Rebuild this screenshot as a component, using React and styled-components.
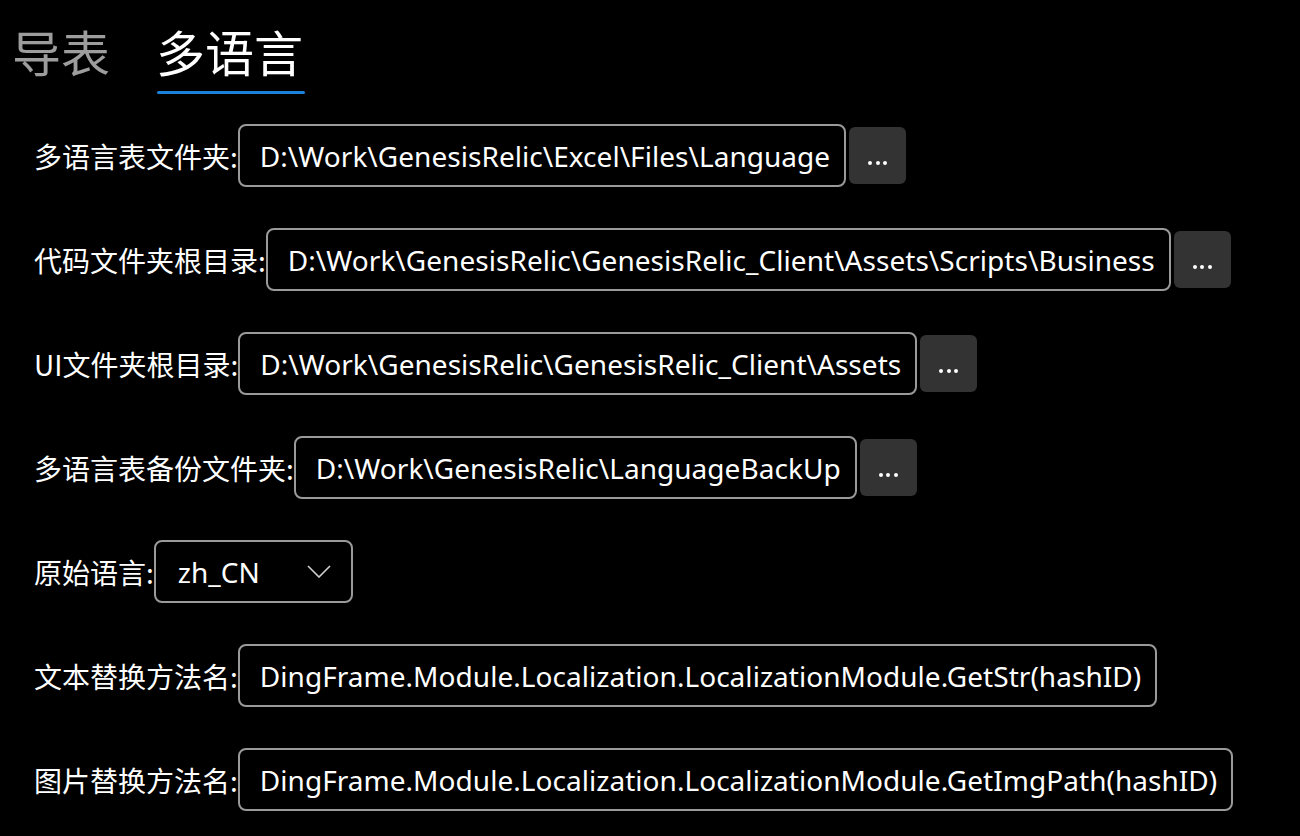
import React, { useState } from 'react'
import styled, { createGlobalStyle } from 'styled-components'

const GlobalStyle = createGlobalStyle`
    html, body {
        margin: 0;
        padding: 0;
        background: #000;
        overflow: hidden;
    }
    body {
        font-family: "Noto Sans", "Noto Sans CJK SC", sans-serif;
        color: #fff;
    }
`;

const Page = styled.div`
    width: 1300px;
    height: 836px;
    background: #000;
    overflow: hidden;
`;

const TabBar = styled.div`
    display: flex;
    gap: 46px;
    padding: 17px 0 0 12px;
`;

const Tab = styled.div`
    position: relative;
    font-family: "Noto Sans CJK SC", sans-serif;
    font-size: 49px;
    line-height: 68px;
    color: ${props => props.active ? '#fff' : '#9d9d9d'};
    padding-bottom: 12px;
    cursor: pointer;

    &::after {
        content: '';
        display: ${props => props.active ? 'block' : 'none'};
        position: absolute;
        left: 1px;
        right: -2px;
        bottom: 3px;
        height: 3px;
        border-radius: 2px;
        background: #1b82dc;
    }
`;

const Form = styled.div`
    display: flex;
    flex-direction: column;
    gap: 41px;
    padding: 27px 0 0 34px;
`;

const Row = styled.div`
    display: flex;
    align-items: center;
    height: 63px;
`;

const Label = styled.span`
    font-family: "Noto Sans CJK SC", sans-serif;
    font-size: 28px;
    color: #fff;
    white-space: nowrap;
`;

const PathBox = styled.div`
    box-sizing: border-box;
    height: 63px;
    display: flex;
    align-items: center;
    padding: 0 14px 0 20px;
    border: 2px solid #9a9a9a;
    border-radius: 8px;
    font-family: "Noto Sans", "Noto Sans CJK SC", sans-serif;
    font-size: 28px;
    letter-spacing: 0.04px;
    color: #fff;
    white-space: nowrap;
`;

const BrowseButton = styled.button`
    width: 57px;
    height: 57px;
    margin-left: 3px;
    border: none;
    border-radius: 6px;
    background: #333;
    display: flex;
    align-items: center;
    justify-content: center;
    gap: 3.5px;
    padding: 14px 0 0;
    cursor: pointer;
`;

const Dot = styled.span`
    width: 4px;
    height: 4px;
    border-radius: 50%;
    background: #fff;
`;

const Select = styled.div`
    box-sizing: border-box;
    width: 199px;
    height: 63px;
    display: flex;
    align-items: center;
    justify-content: space-between;
    padding: 0 20px 0 22px;
    border: 2px solid #9a9a9a;
    border-radius: 8px;
    font-family: "Noto Sans", sans-serif;
    font-size: 28px;
    color: #fff;
    cursor: pointer;
`;

const Chevron = () => (
    <svg width="24" height="13" viewBox="0 0 24 13" fill="none">
        <path d="M1 1 L12 12 L23 1" stroke="#d0d0d0" strokeWidth="1.6" />
    </svg>
);

const pathRows = [
    { label: '多语言表文件夹:', value: 'D:\\Work\\GenesisRelic\\Excel\\Files\\Language' },
    { label: '代码文件夹根目录:', value: 'D:\\Work\\GenesisRelic\\GenesisRelic_Client\\Assets\\Scripts\\Business' },
    { label: 'UI文件夹根目录:', value: 'D:\\Work\\GenesisRelic\\GenesisRelic_Client\\Assets' },
    { label: '多语言表备份文件夹:', value: 'D:\\Work\\GenesisRelic\\LanguageBackUp' },
];

const methodRows = [
    { label: '文本替换方法名:', value: 'DingFrame.Module.Localization.LocalizationModule.GetStr(hashID)' },
    { label: '图片替换方法名:', value: 'DingFrame.Module.Localization.LocalizationModule.GetImgPath(hashID)' },
];

export default function App() {

    const [ tab, setTab ] = useState(1)
    const [ lang ] = useState('zh_CN')

    return (
        <Page>
            <GlobalStyle />
            <TabBar>
                <Tab active={tab === 0} onClick={() => setTab(0)}>导表</Tab>
                <Tab active={tab === 1} onClick={() => setTab(1)}>多语言</Tab>
            </TabBar>
            <Form>
                {pathRows.map(row => (
                    <Row key={row.label}>
                        <Label>{row.label}</Label>
                        <PathBox>{row.value}</PathBox>
                        <BrowseButton aria-label="browse">
                            <Dot /><Dot /><Dot />
                        </BrowseButton>
                    </Row>
                ))}
                <Row>
                    <Label>原始语言:</Label>
                    <Select>
                        <span>{lang}</span>
                        <Chevron />
                    </Select>
                </Row>
                {methodRows.map(row => (
                    <Row key={row.label}>
                        <Label>{row.label}</Label>
                        <PathBox>{row.value}</PathBox>
                    </Row>
                ))}
            </Form>
        </Page>
    )
}
